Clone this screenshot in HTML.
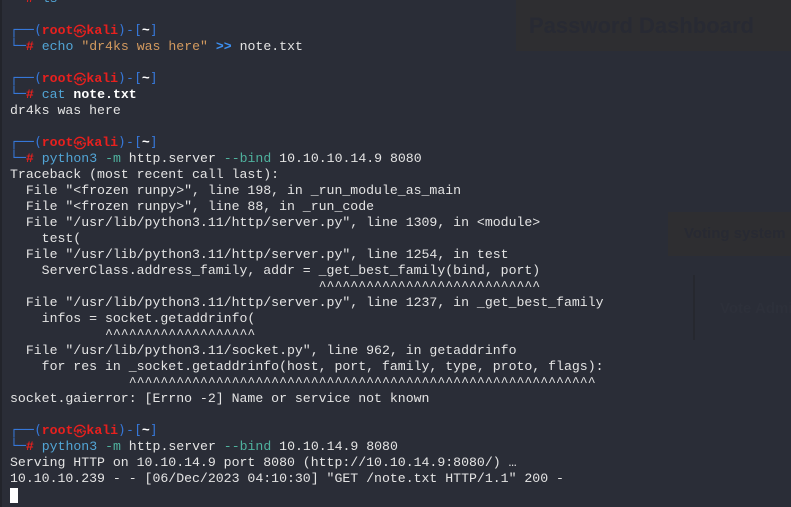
<!DOCTYPE html>
<html><head><meta charset="utf-8"><style>
html,body{margin:0;padding:0;width:791px;height:507px;overflow:hidden;background:#2a2d37;}
pre{position:absolute;left:10px;top:-9px;margin:0;font-family:"Liberation Mono","DejaVu Sans Mono","Noto Sans CJK JP",monospace;font-size:13.2px;line-height:16px;color:#e4e4e4;white-space:pre;z-index:2}
.f{color:#3677d8;font-family:"DejaVu Sans Mono",monospace;}
.r{color:#e8201e;font-weight:bold}
.rs{color:#e8201e;font-family:"Noto Sans CJK JP",sans-serif;font-size:13px;display:inline-block;width:13px;height:16px;line-height:16px;vertical-align:top;overflow:hidden;text-align:center}
.c{color:#52a5d6}
.s{color:#d39a5f}
.o{color:#3d8ff0;font-weight:bold}
.t{color:#4fb29e}
.b{font-weight:bold;color:#fff}
.g1{position:absolute;left:516px;top:0;width:275px;height:51px;background:#2e2e31;z-index:1}
.g1 span{position:absolute;left:13px;top:13px;font:bold 22px "Liberation Sans",sans-serif;color:#282a33}
.g2{position:absolute;left:668px;top:212px;width:123px;height:44px;background:#2e2e31;z-index:1}
.g2 span{position:absolute;left:16px;top:13px;font:bold 15px "Liberation Sans",sans-serif;color:#282a33;white-space:nowrap}
.g3{position:absolute;left:693px;top:275px;width:2px;height:65px;background:#26282f;z-index:1}
.g4{position:absolute;left:720px;top:300px;font:bold 15px "Liberation Sans",sans-serif;color:#2d303a;white-space:nowrap;z-index:1}
.cur{display:inline-block;width:8px;height:15px;background:#fff;vertical-align:top;margin-top:1px}
.lb{position:absolute;left:0;top:0;width:2px;height:507px;background:#22242b;z-index:3}
.el{display:inline-block;width:8px;height:16px;line-height:16px;vertical-align:top;overflow:hidden;text-align:center}
</style></head><body>
<div class="lb"></div>
<div class="g1"><span>Password Dashboard</span></div>
<div class="g2"><span>Voting system</span></div>
<div class="g3"></div>
<div class="g4">Vote Admin</div>
<pre><span class="f">└─</span><span class="r">#</span> <span class="c">ls</span>

<span class="f">┌──(</span><span class="r">root</span><span class="rs">㉿</span><span class="r">kali</span><span class="f">)-[</span><span class="b">~</span><span class="f">]</span>
<span class="f">└─</span><span class="r">#</span> <span class="c">echo</span> <span class="s">"dr4ks was here"</span> <span class="o">&gt;&gt;</span> note.txt

<span class="f">┌──(</span><span class="r">root</span><span class="rs">㉿</span><span class="r">kali</span><span class="f">)-[</span><span class="b">~</span><span class="f">]</span>
<span class="f">└─</span><span class="r">#</span> <span class="c">cat</span> <span class="b">note.txt</span>
dr4ks was here

<span class="f">┌──(</span><span class="r">root</span><span class="rs">㉿</span><span class="r">kali</span><span class="f">)-[</span><span class="b">~</span><span class="f">]</span>
<span class="f">└─</span><span class="r">#</span> <span class="c">python3</span> <span class="t">-m</span> http.server <span class="t">--bind</span> 10.10.10.14.9 8080
Traceback (most recent call last):
  File "&lt;frozen runpy&gt;", line 198, in _run_module_as_main
  File "&lt;frozen runpy&gt;", line 88, in _run_code
  File "/usr/lib/python3.11/http/server.py", line 1309, in &lt;module&gt;
    test(
  File "/usr/lib/python3.11/http/server.py", line 1254, in test
    ServerClass.address_family, addr = _get_best_family(bind, port)
                                       ^^^^^^^^^^^^^^^^^^^^^^^^^^^^
  File "/usr/lib/python3.11/http/server.py", line 1237, in _get_best_family
    infos = socket.getaddrinfo(
            ^^^^^^^^^^^^^^^^^^^
  File "/usr/lib/python3.11/socket.py", line 962, in getaddrinfo
    for res in _socket.getaddrinfo(host, port, family, type, proto, flags):
               ^^^^^^^^^^^^^^^^^^^^^^^^^^^^^^^^^^^^^^^^^^^^^^^^^^^^^^^^^^^
socket.gaierror: [Errno -2] Name or service not known

<span class="f">┌──(</span><span class="r">root</span><span class="rs">㉿</span><span class="r">kali</span><span class="f">)-[</span><span class="b">~</span><span class="f">]</span>
<span class="f">└─</span><span class="r">#</span> <span class="c">python3</span> <span class="t">-m</span> http.server <span class="t">--bind</span> 10.10.14.9 8080
Serving HTTP on 10.10.14.9 port 8080 (http://10.10.14.9:8080/) <span class="el">…</span>
10.10.10.239 - - [06/Dec/2023 04:10:30] "GET /note.txt HTTP/1.1" 200 -
<span class="cur"></span></pre>
</body></html>
